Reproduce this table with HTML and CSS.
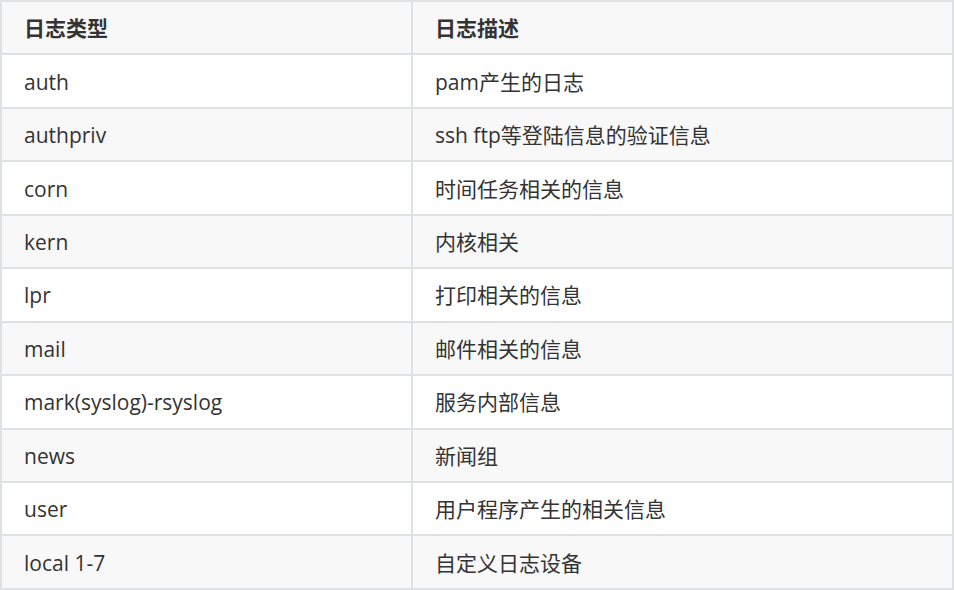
FILE: index.html
```html
<!DOCTYPE html>
<html lang="zh">
<head>
<meta charset="utf-8">
<link rel="stylesheet" href="styles.css">
</head>
<body>
<table class="log-table">
  <colgroup><col class="c1"><col class="c2"></colgroup>
  <thead>
    <tr><th>日志类型</th><th>日志描述</th></tr>
  </thead>
  <tbody>
    <tr><td>auth</td><td>pam产生的日志</td></tr>
    <tr><td>authpriv</td><td>ssh ftp等登陆信息的验证信息</td></tr>
    <tr><td>corn</td><td>时间任务相关的信息</td></tr>
    <tr><td>kern</td><td>内核相关</td></tr>
    <tr><td>lpr</td><td>打印相关的信息</td></tr>
    <tr><td>mail</td><td>邮件相关的信息</td></tr>
    <tr><td>mark(syslog)-rsyslog</td><td>服务内部信息</td></tr>
    <tr><td>news</td><td>新闻组</td></tr>
    <tr><td>user</td><td>用户程序产生的相关信息</td></tr>
    <tr><td>local 1-7</td><td>自定义日志设备</td></tr>
  </tbody>
</table>
</body>
</html>
```
FILE: styles.css
```css
html, body {
  margin: 0;
  padding: 0;
  background: #ffffff;
}
.log-table {
  width: 954px;
  border-collapse: collapse;
  font-family: "Open Sans", "Noto Sans CJK SC", sans-serif;
  font-size: 21px;
  color: #333333;
  table-layout: fixed;
}
.c1 { width: 411px; }
.log-table th,
.log-table td {
  border: 2px solid #dfe2e5;
  padding: 11px 22px 9px;
  height: 31.45px;
  line-height: 31px;
  text-align: left;
  white-space: nowrap;
  box-sizing: content-box;
}
.log-table th {
  font-weight: bold;
}
.log-table thead tr,
.log-table tbody tr:nth-child(even) {
  background: #f8f8f8;
}
```
